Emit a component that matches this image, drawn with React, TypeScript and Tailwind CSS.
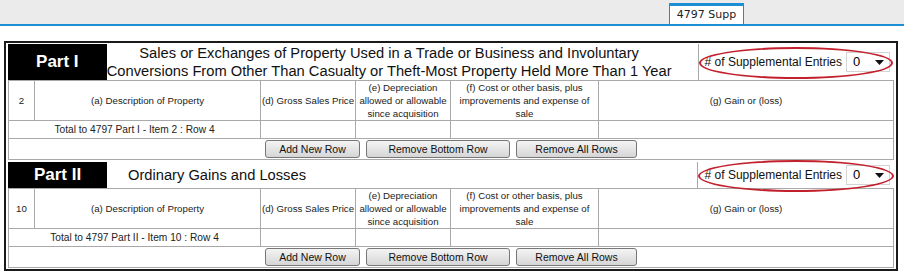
import { FC } from "react";

type PartProps = {
  label: string;
  title: string[];
  twoLine: boolean;
  item: string;
  totalText: string;
};

const cell = "border border-[#a9a9a9] text-center align-middle p-0";

const Supplemental: FC<{ tall: boolean }> = ({ tall }) => (
  <div className="relative w-[197px] border-l border-[#a9a9a9] flex items-center justify-end pr-[4px] gap-[4px]">
    <span className="text-[12px] whitespace-nowrap text-[#111]">
      # of Supplemental Entries
    </span>
    <div className="w-[44px] h-[20px] bg-white border border-[#d4d4d4] flex items-center justify-between pl-[6px] pr-[5px] text-[13px]">
      <span>0</span>
      <svg width="9" height="5" viewBox="0 0 9 5">
        <path d="M0 0h9L4.5 5z" fill="#111" />
      </svg>
    </div>
    {/* red annotation ring */}
    <div
      className={
        tall
          ? "absolute left-0 right-[1px] top-[3px] bottom-[1px] rounded-[50%] border-2 border-[#c2202c] pointer-events-none"
          : "absolute left-0 right-0 top-[-2px] bottom-[-4px] rounded-[50%] border-2 border-[#c2202c] pointer-events-none"
      }
    />
  </div>
);

const RowButton: FC<{ text: string; width: string }> = ({ text, width }) => (
  <button
    className={`${width} h-[18px] rounded-[3px] border border-[#777] bg-gradient-to-b from-[#f4f4f4] to-[#d6d6d6] text-[10.5px] leading-[16px] text-[#111]`}
  >
    {text}
  </button>
);

const Part: FC<PartProps> = ({ label, title, twoLine, item, totalText }) => (
  <div className="w-[886px]">
    <div className={`flex ${twoLine ? "h-[36px]" : "h-[26px]"}`}>
      <div className="w-[99px] bg-black flex items-center justify-center text-white font-bold text-[17px]">
        {label}
      </div>
      {twoLine ? (
        <div className="flex-1 flex flex-col items-center justify-center pr-[26px] text-[14.7px] leading-[18px] whitespace-nowrap text-[#111]">
          {title.map((t) => (
            <span key={t}>{t}</span>
          ))}
        </div>
      ) : (
        <div className="flex-1 flex items-center pl-[21px] text-[14.7px] text-[#111]">
          {title[0]}
        </div>
      )}
      <Supplemental tall={twoLine} />
    </div>

    <table className="w-[886px] table-fixed border-collapse text-[9.7px] leading-[13px] text-[#222]">
      <colgroup>
        <col className="w-[26px]" />
        <col className="w-[226px]" />
        <col className="w-[95px]" />
        <col className="w-[95px]" />
        <col className="w-[148px]" />
        <col />
      </colgroup>
      <tbody>
        <tr className="h-[40px]">
          <td className={cell}>{item}</td>
          <td className={cell}>(a) Description of Property</td>
          <td className={`${cell} whitespace-nowrap`}>(d) Gross Sales Price</td>
          <td className={cell}>
            (e) Depreciation allowed or allowable since acquisition
          </td>
          <td className={cell}>
            (f) Cost or other basis, plus improvements and expense of sale
          </td>
          <td className={cell}>(g) Gain or (loss)</td>
        </tr>
        <tr className="h-[18px]">
          <td className={`${cell} text-[10.2px]`} colSpan={2}>
            {totalText}
          </td>
          <td className={cell}></td>
          <td className={cell}></td>
          <td className={cell}></td>
          <td className={cell}></td>
        </tr>
        <tr className="h-[21px]">
          <td className={cell} colSpan={6}>
            <div className="flex justify-center gap-[6px]">
              <RowButton text="Add New Row" width="w-[95px]" />
              <RowButton text="Remove Bottom Row" width="w-[144px]" />
              <RowButton text="Remove All Rows" width="w-[121px]" />
            </div>
          </td>
        </tr>
      </tbody>
    </table>
  </div>
);

export default function App() {
  return (
    <div className="w-[904px] h-[275px] bg-white font-['Liberation_Sans',Arial,sans-serif]">
      <div className="h-[26px] bg-[#ebebeb] border-b-2 border-[#1b8fd3] flex items-end">
        <div className="ml-[669px] w-[75px] h-[21px] bg-white border-t-[3px] border-x border-[#1b8fd3] flex items-center justify-center font-['DejaVu_Sans',Verdana,sans-serif] text-[11px] text-[#222]">
          4797 Supp
        </div>
      </div>

      <div className="mt-[15px] ml-[4px] w-[894px] border-2 border-[#1a1a1a] px-[2px] pt-[1px] pb-[1px] flex flex-col gap-[2px]">
        <Part
          label="Part I"
          title={[
            "Sales or Exchanges of Property Used in a Trade or Business and Involuntary",
            "Conversions From Other Than Casualty or Theft-Most Property Held More Than 1 Year"
          ]}
          twoLine
          item="2"
          totalText="Total to 4797 Part I - Item 2 : Row 4"
        />
        <Part
          label="Part II"
          title={["Ordinary Gains and Losses"]}
          twoLine={false}
          item="10"
          totalText="Total to 4797 Part II - Item 10 : Row 4"
        />
      </div>
    </div>
  );
}
